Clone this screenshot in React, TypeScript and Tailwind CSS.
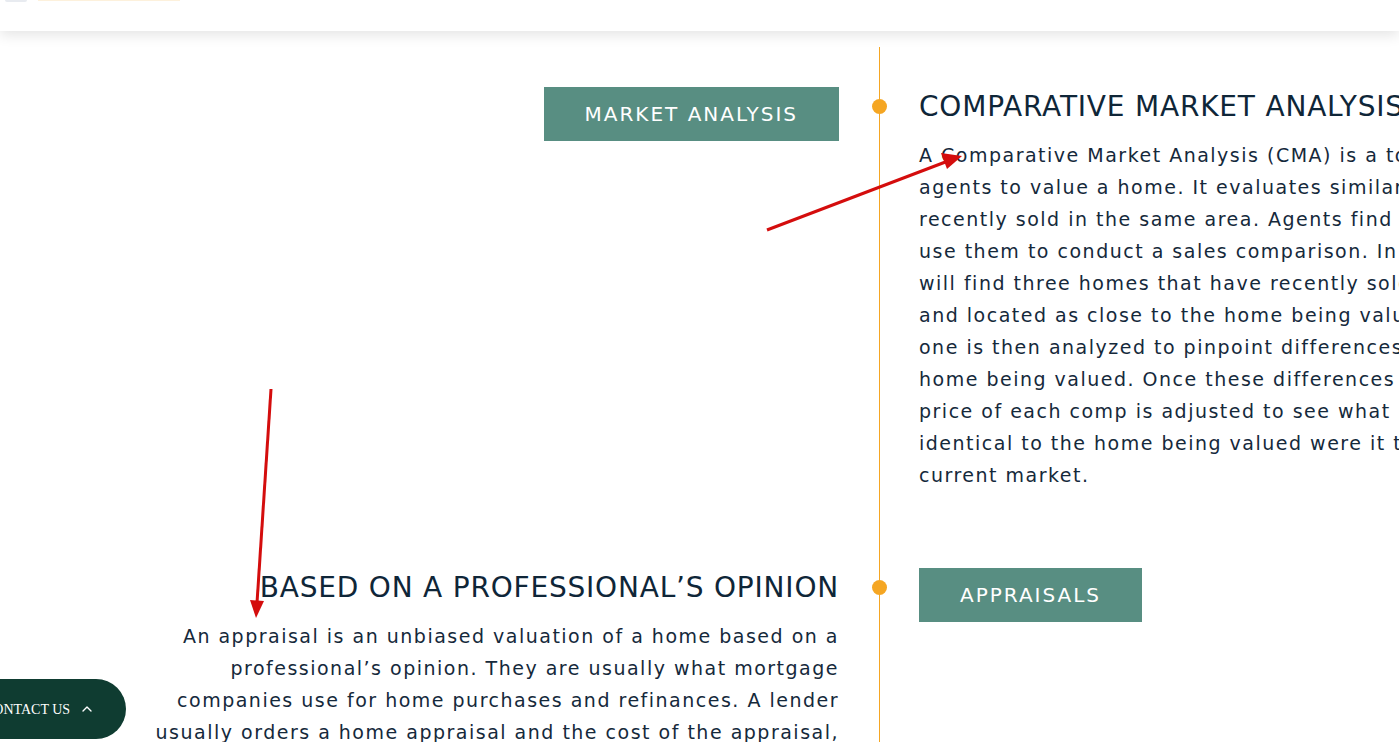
import { ChevronUp } from "lucide-react";

const font = "font-['DejaVu_Sans','Noto_Sans',sans-serif]";

const cmaLines = [
  "A Comparative Market Analysis (CMA) is a tool used by real estate",
  "agents to value a home. It evaluates similar properties (comps) that",
  "recently sold in the same area. Agents find these comps and then",
  "use them to conduct a sales comparison. In most cases, an agent",
  "will find three homes that have recently sold, are similar in size,",
  "and located as close to the home being valued as possible. Each",
  "one is then analyzed to pinpoint differences between it and the",
  "home being valued. Once these differences are identified, the",
  "price of each comp is adjusted to see what it would sell for if",
  "identical to the home being valued were it to sell in today’s",
  "current market.",
];

const appraisalLines = [
  "An appraisal is an unbiased valuation of a home based on a",
  "professional’s opinion. They are usually what mortgage",
  "companies use for home purchases and refinances. A lender",
  "usually orders a home appraisal and the cost of the appraisal,",
  "which typically ranges from $300 to $500, is paid by the buyer.",
];

function Dot() {
  return (
    <div className="flex justify-center bg-[linear-gradient(#f5a623,#f5a623)] bg-[length:1px_100%] bg-center bg-no-repeat pt-[52px]">
      <div className="size-[15px] rounded-full bg-[#f5a623]" />
    </div>
  );
}

function TagButton({ label }: { label: string }) {
  return (
    <div className="mt-10 flex h-[54px] items-center bg-[#588e82] px-[41px] text-[20px] tracking-[2px] text-white">
      {label}
    </div>
  );
}

function Heading({ children }: { children: string }) {
  return (
    <h2 className="pt-[43px] text-[28px] leading-[34px] font-normal tracking-[0.8px] whitespace-nowrap text-[#0f2638]">
      {children}
    </h2>
  );
}

function Lines({ lines }: { lines: string[] }) {
  return (
    <p className="mt-[15px] text-[19px] leading-[32px] tracking-[1.5px] text-[#15293b]">
      {lines.map((l) => (
        <span key={l} className="block whitespace-nowrap">
          {l}
        </span>
      ))}
    </p>
  );
}

function Arrows() {
  return (
    <svg
      className="pointer-events-none absolute inset-0 z-50"
      width="1399"
      height="742"
      viewBox="0 0 1399 742"
    >
      <line x1="767" y1="230" x2="948" y2="161" stroke="#d40d0d" strokeWidth="3" />
      <polygon points="962,156 941,153 947,169" fill="#d40d0d" />
      <line x1="271" y1="389" x2="257" y2="603" stroke="#d40d0d" strokeWidth="3" />
      <polygon points="256,618 250,600 264,601" fill="#d40d0d" />
    </svg>
  );
}

export default function App() {
  return (
    <div className={`relative h-screen w-full overflow-hidden bg-white ${font}`}>
      <header className="relative z-10 flex h-[31px] items-start gap-[11px] bg-white pl-[5px] shadow-[0_4px_14px_rgba(0,0,0,0.11)]">
        <div className="h-[2px] w-[22px] rounded-b-full bg-[#e8ebf0]" />
        <div className="h-px w-[142px] bg-[#fdf1dc]" />
      </header>

      <main className="pt-4">
        <div className="grid grid-cols-[839px_80px_800px]">
          {/* row 1 */}
          <div className="flex justify-end">
            <TagButton label="MARKET ANALYSIS" />
          </div>
          <Dot />
          <div className="pb-[37px]">
            <Heading>COMPARATIVE MARKET ANALYSIS</Heading>
            <Lines lines={cmaLines} />
          </div>

          {/* row 2 */}
          <div className="flex flex-col items-end text-right">
            <Heading>BASED ON A PROFESSIONAL’S OPINION</Heading>
            <Lines lines={appraisalLines} />
          </div>
          <Dot />
          <div className="flex items-start">
            <TagButton label="APPRAISALS" />
          </div>
        </div>
      </main>

      <button
        type="button"
        className="fixed bottom-[3px] left-[-46px] z-40 flex h-[60px] items-center gap-[9px] rounded-r-full bg-[#0f3c31] pr-[31px] pl-[30px] font-['Liberation_Serif',serif] text-[14px] font-normal text-white"
      >
        CONTACT US
        <ChevronUp size={16} strokeWidth={2} />
      </button>

      <Arrows />
    </div>
  );
}
